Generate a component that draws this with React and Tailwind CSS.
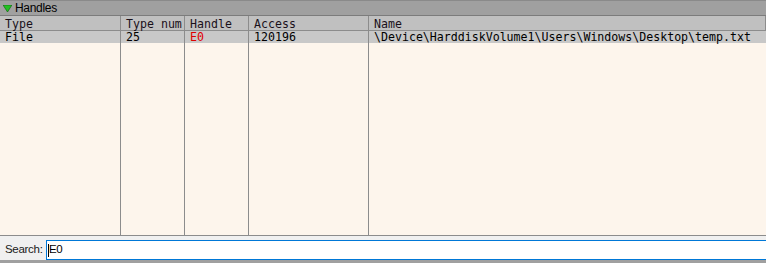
const columns = [
  { label: "Type", width: "w-[121px]" },
  { label: "Type num", width: "w-[64px]" },
  { label: "Handle", width: "w-[64px]" },
  { label: "Access", width: "w-[120px]" },
  { label: "Name", width: "flex-1" },
];

const rows = [
  {
    type: "File",
    typeNum: "25",
    handle: "E0",
    access: "120196",
    name: "\\Device\\HarddiskVolume1\\Users\\Windows\\Desktop\\temp.txt",
  },
];

export default function App() {
  const mono = "font-['DejaVu_Sans_Mono',monospace] text-[11.6px] leading-none";
  const ui = "font-['Liberation_Sans',Arial,sans-serif] text-[11.5px] tracking-[-0.3px]";

  return (
    <div className="w-[766px] h-[263px] flex flex-col bg-[#f0f0f0] overflow-hidden">
      {/* panel title */}
      <div className={`h-[16px] shrink-0 flex items-center gap-[3px] pl-[3px] bg-[#a0a0a0] border-t border-[#8a8a8a] border-b border-b-[#7c7c7c] text-black ${ui}`}>
        <svg width="9" height="7" viewBox="0 0 9 7">
          <polygon points="0,0 9,0 4.5,7" fill="#22c022" stroke="#0a5a0a" strokeWidth="0.6" />
        </svg>
        <span className="text-[12px]">Handles</span>
      </div>

      {/* table */}
      <div className="flex-1 flex flex-col bg-[#fdf5ec]">
        <div className={`h-[15px] shrink-0 flex bg-[#c0c0c0] border-b border-[#8c8c8c] text-[#1a101a] ${mono}`}>
          {columns.map((col, i) => (
            <div
              key={i}
              className={`${col.width} flex items-center pt-[3px] pl-[5px] border-r border-[#8c8c8c] shrink-0`}
            >
              {col.label}
            </div>
          ))}
        </div>
        {rows.map((row, i) => (
          <div key={i} className={`h-[12px] shrink-0 flex bg-[#c8c8c8] text-black ${mono}`}>
            <div className="w-[121px] pl-[5px] pt-[1px] flex items-center border-r border-[#8c8c8c] shrink-0">{row.type}</div>
            <div className="w-[64px] pl-[5px] pt-[1px] flex items-center border-r border-[#8c8c8c] shrink-0">{row.typeNum}</div>
            <div className="w-[64px] pl-[5px] pt-[1px] flex items-center border-r border-[#8c8c8c] shrink-0 text-[#e00000]">{row.handle}</div>
            <div className="w-[120px] pl-[5px] pt-[1px] flex items-center border-r border-[#8c8c8c] shrink-0">{row.access}</div>
            <div className="flex-1 pl-[5px] pt-[1px] flex items-center whitespace-nowrap">{row.name}</div>
          </div>
        ))}
        <div className="flex-1 flex">
          <div className="w-[121px] border-r border-[#8c8c8c] shrink-0" />
          <div className="w-[64px] border-r border-[#8c8c8c] shrink-0" />
          <div className="w-[64px] border-r border-[#8c8c8c] shrink-0" />
          <div className="w-[120px] border-r border-[#8c8c8c] shrink-0" />
          <div className="flex-1" />
        </div>
      </div>

      {/* search bar */}
      <div className="h-[28px] shrink-0 flex items-start pt-[4px] border-t border-[#8c8c8c] bg-[#f0f0f0] border-b-[3px] border-b-[#a0a0a0]">
        <span className={`h-[20px] flex items-center pl-[5px] w-[46px] shrink-0 text-[#1a1a1a] ${ui}`}>
          Search:
        </span>
        <div className="flex-1 h-[20px] bg-white border-y border-l border-[#0078d7] flex items-center pl-[1px]">
          <span className={`text-black flex items-center ${ui}`}>
            <span className="inline-block w-[1px] h-[13px] bg-black" />
            E0
          </span>
        </div>
      </div>
    </div>
  );
}
